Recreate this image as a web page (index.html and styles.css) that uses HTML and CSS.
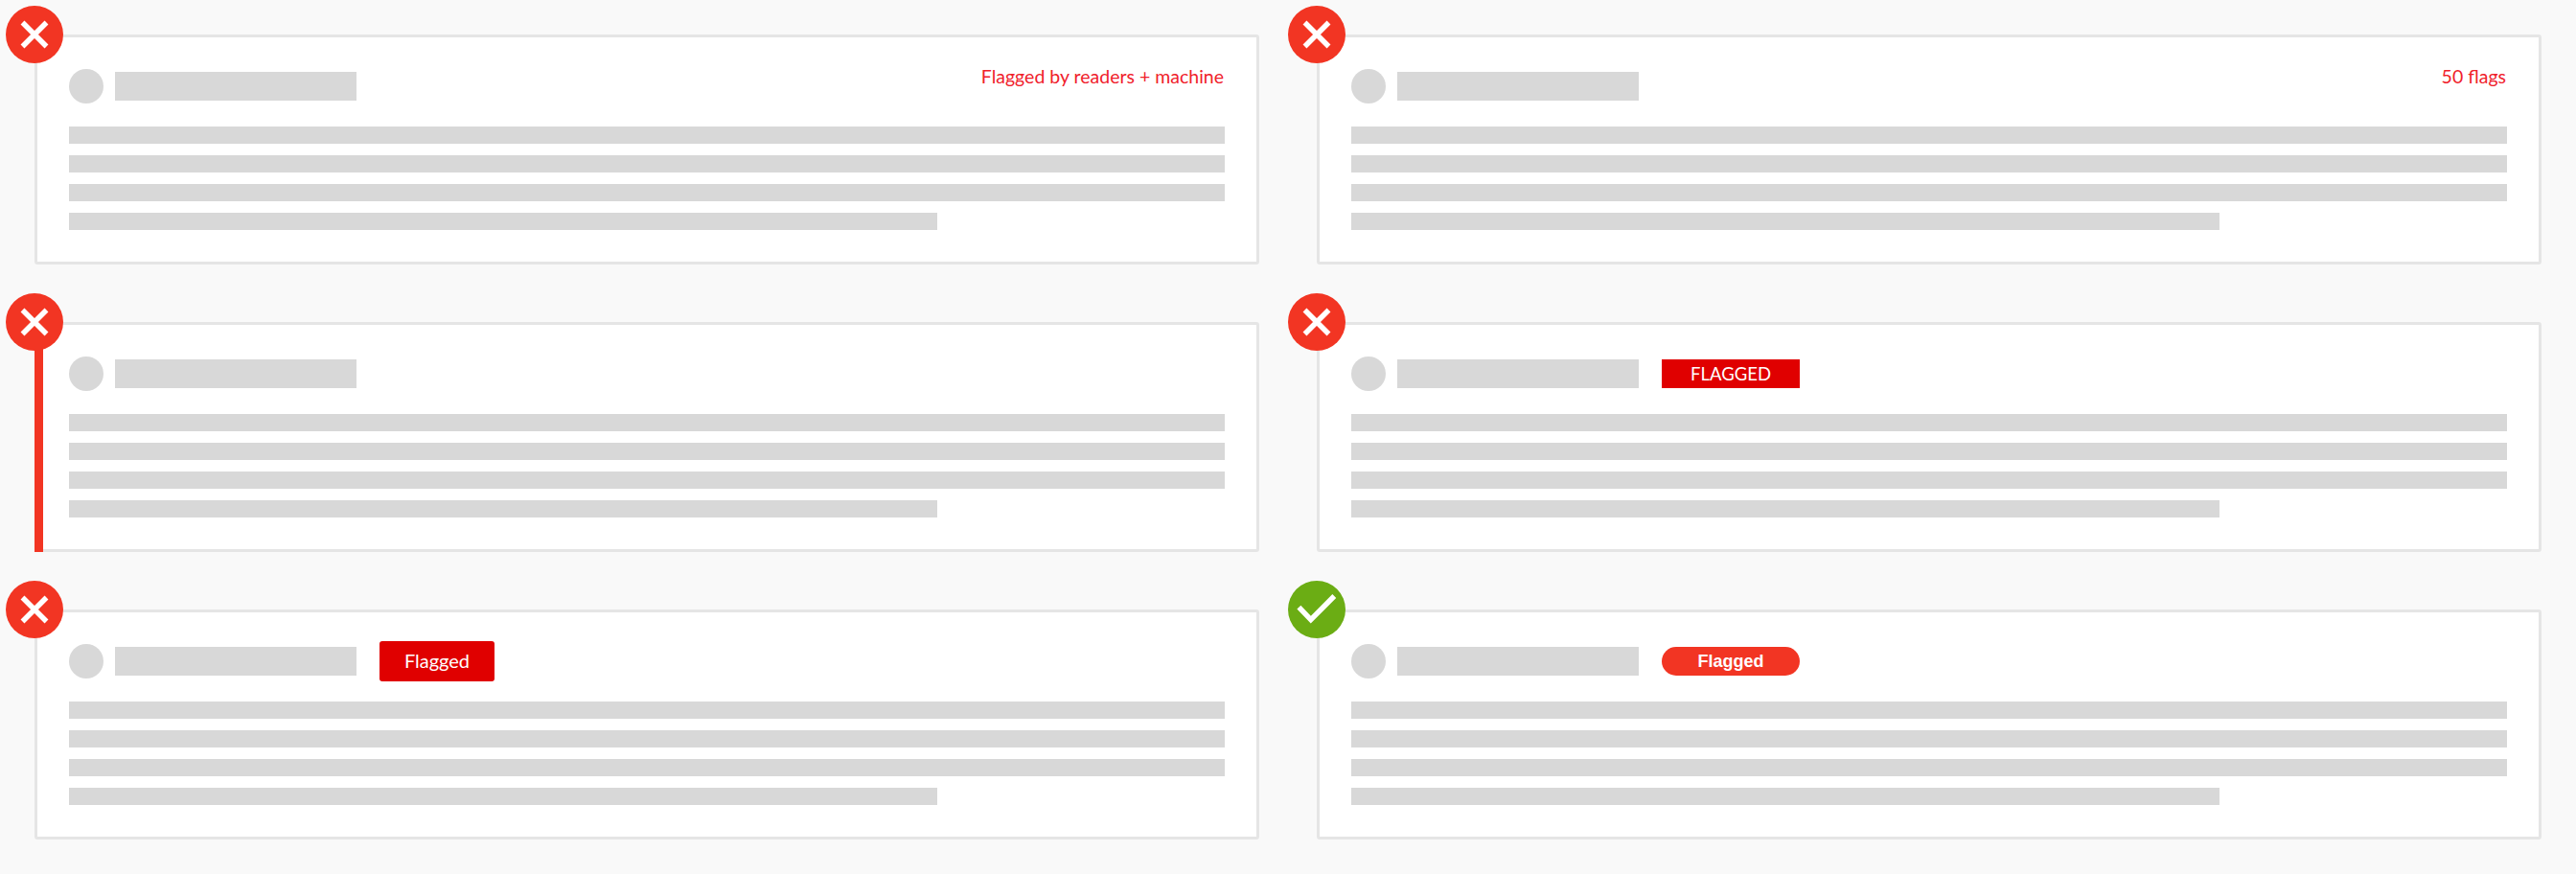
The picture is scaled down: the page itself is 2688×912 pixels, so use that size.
FILE: index.html
```html
<!DOCTYPE html>
<html lang="en">
<head>
<meta charset="UTF-8">
<meta name="viewport" content="width=device-width, initial-scale=1.0">
<title>Flagged comment patterns</title>
<link rel="stylesheet" href="styles.css">
</head>
<body>

<div class="grid">

    <div class="card">
        <svg class="status" viewBox="0 0 60 60"><circle class="status-bad" cx="30" cy="30" r="30"/><path class="status-mark" d="M17.5 17.5L42.5 42.5M42.5 17.5L17.5 42.5"/></svg>
        <div class="card-head">
            <div class="avatar"></div>
            <div class="name"></div>
            <div class="note">Flagged by readers + machine</div>
        </div>
        <div class="line"></div>
        <div class="line"></div>
        <div class="line"></div>
        <div class="line line-short"></div>
    </div>

    <div class="card">
        <svg class="status" viewBox="0 0 60 60"><circle class="status-bad" cx="30" cy="30" r="30"/><path class="status-mark" d="M17.5 17.5L42.5 42.5M42.5 17.5L17.5 42.5"/></svg>
        <div class="card-head">
            <div class="avatar"></div>
            <div class="name"></div>
            <div class="note">50 flags</div>
        </div>
        <div class="line"></div>
        <div class="line"></div>
        <div class="line"></div>
        <div class="line line-short"></div>
    </div>

    <div class="card card-bar">
        <svg class="status" viewBox="0 0 60 60"><circle class="status-bad" cx="30" cy="30" r="30"/><path class="status-mark" d="M17.5 17.5L42.5 42.5M42.5 17.5L17.5 42.5"/></svg>
        <div class="card-head">
            <div class="avatar"></div>
            <div class="name"></div>
        </div>
        <div class="line"></div>
        <div class="line"></div>
        <div class="line"></div>
        <div class="line line-short"></div>
    </div>

    <div class="card">
        <svg class="status" viewBox="0 0 60 60"><circle class="status-bad" cx="30" cy="30" r="30"/><path class="status-mark" d="M17.5 17.5L42.5 42.5M42.5 17.5L17.5 42.5"/></svg>
        <div class="card-head">
            <div class="avatar"></div>
            <div class="name"></div>
            <div class="tag tag-caps">FLAGGED</div>
        </div>
        <div class="line"></div>
        <div class="line"></div>
        <div class="line"></div>
        <div class="line line-short"></div>
    </div>

    <div class="card">
        <svg class="status" viewBox="0 0 60 60"><circle class="status-bad" cx="30" cy="30" r="30"/><path class="status-mark" d="M17.5 17.5L42.5 42.5M42.5 17.5L17.5 42.5"/></svg>
        <div class="card-head">
            <div class="avatar"></div>
            <div class="name"></div>
            <div class="tag tag-button">Flagged</div>
        </div>
        <div class="line"></div>
        <div class="line"></div>
        <div class="line"></div>
        <div class="line line-short"></div>
    </div>

    <div class="card">
        <svg class="status" viewBox="0 0 60 60"><circle class="status-good" cx="30" cy="30" r="30"/><path class="status-mark" d="M11.4 27.7L23.8 40.6L48.3 16"/></svg>
        <div class="card-head">
            <div class="avatar"></div>
            <div class="name"></div>
            <div class="tag tag-pill">Flagged</div>
        </div>
        <div class="line"></div>
        <div class="line"></div>
        <div class="line"></div>
        <div class="line line-short"></div>
    </div>

</div>

</body>
</html>
```

FILE: styles.css
```css
body {
    font-family: Lato, "Liberation Sans", sans-serif;
    margin: 0;
    padding: 36px;
    background-color: #f9f9f9;
}
.grid {
    display: grid;
    grid-template-columns: 1278px 1278px;
    column-gap: 60px;
    row-gap: 60px;
}
.card {
    position: relative;
    height: 240px;
    box-sizing: border-box;
    padding: 33px;
    background-color: #fff;
    border: 3px solid #e5e5e5;
    border-radius: 3px;
}
/* red strip down the left edge, drawn over the border */
.card-bar::before {
    content: "";
    position: absolute;
    top: -3px;
    bottom: -3px;
    left: -3px;
    width: 9px;
    background-color: #f23523;
}
.status {
    position: absolute;
    z-index: 1;
    top: -33px;
    left: -33px;
    width: 60px;
    height: 60px;
}
.status-bad {
    fill: #f23523;
}
.status-good {
    fill: #6bad14;
}
.status-mark {
    fill: none;
    stroke: #fff;
    stroke-width: 5.5;
}
.card-head {
    display: flex;
    align-items: center;
    height: 36px;
    margin-bottom: 24px;
}
.avatar {
    width: 36px;
    height: 36px;
    margin-right: 12px;
    border-radius: 50%;
    background-color: #d8d8d8;
}
.name {
    width: 252px;
    height: 30px;
    background-color: #d8d8d8;
}
.note {
    margin-left: auto;
    margin-right: 1px;
    align-self: flex-start;
    font-size: 19.5px;
    line-height: 16px;
    color: #f0212b;
}
.tag {
    margin-left: 24px;
    color: #fff;
    text-align: center;
    font-size: 20px;
}
.tag-caps {
    width: 144px;
    font-size: 18.5px;
    line-height: 30px;
    background-color: #e00000;
}
.tag-button {
    width: 120px;
    height: 42px;
    line-height: 40px;
    background-color: #e00000;
    border-radius: 3px;
}
.tag-pill {
    width: 144px;
    line-height: 30px;
    font-family: "Liberation Sans", sans-serif;
    font-size: 18px;
    font-weight: bold;
    background-color: #f23523;
    border-radius: 15px;
}
.line {
    height: 18px;
    margin-bottom: 12px;
    background-color: #d8d8d8;
}
.line-short {
    width: 906px;
    margin-bottom: 0;
}
```
